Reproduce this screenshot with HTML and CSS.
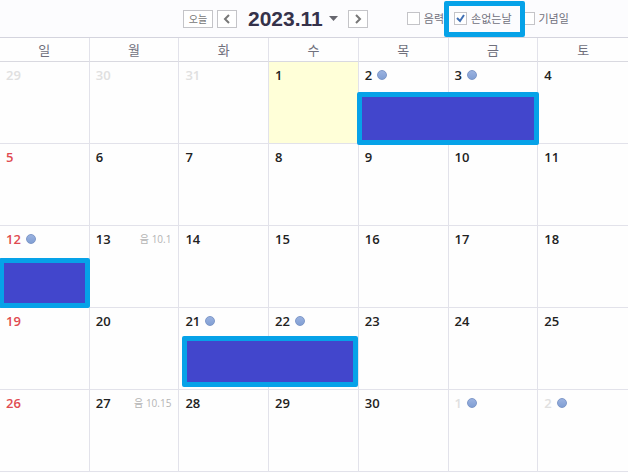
FILE: index.html
```html
<!DOCTYPE html>
<html lang="ko">
<head>
  <meta charset="UTF-8">
  <title>2023.11</title>
  <meta name="viewport" content="width=device-width, initial-scale=1.0">
  <link rel="stylesheet" href="styles.css">
</head>
<body>

  <!-- Toolbar -->
  <header class="toolbar">
    <div class="month-nav">
      <button type="button" class="btn btn-today">오늘</button>
      <button type="button" class="btn btn-arrow" aria-label="이전 달">
        <svg width="8" height="10" viewBox="0 0 8 10"><path d="M6 1L2 5l4 4" /></svg>
      </button>
      <button type="button" class="month">
        2023.11
        <svg class="caret" width="9" height="5" viewBox="0 0 9 5"><path d="M0 0h9L4.5 5z" /></svg>
      </button>
      <button type="button" class="btn btn-arrow" aria-label="다음 달">
        <svg width="8" height="10" viewBox="0 0 8 10"><path d="M2 1l4 4-4 4" /></svg>
      </button>
    </div>
    <div class="options">
      <label class="option"><input type="checkbox">음력</label>
      <label class="option marked"><input type="checkbox" checked>손없는날</label>
      <label class="option"><input type="checkbox">기념일</label>
    </div>
  </header>

  <!-- Calendar -->
  <table class="calendar">
    <thead>
      <tr><th>일</th><th>월</th><th>화</th><th>수</th><th>목</th><th>금</th><th>토</th></tr>
    </thead>
    <tbody>
      <tr>
        <td class="other"><div class="day">29</div></td>
        <td class="other"><div class="day">30</div></td>
        <td class="other"><div class="day">31</div></td>
        <td class="today"><div class="day">1</div></td>
        <td><div class="day">2<i class="dot"></i></div><div class="event event-top"></div></td>
        <td><div class="day">3<i class="dot"></i></div></td>
        <td><div class="day">4</div></td>
      </tr>
      <tr>
        <td class="sun"><div class="day">5</div></td>
        <td><div class="day">6</div></td>
        <td><div class="day">7</div></td>
        <td><div class="day">8</div></td>
        <td><div class="day">9</div></td>
        <td><div class="day">10</div></td>
        <td><div class="day">11</div></td>
      </tr>
      <tr>
        <td class="sun"><div class="day">12<i class="dot"></i></div><div class="event event-single"></div></td>
        <td><div class="day">13<span class="lunar">음 10.1</span></div></td>
        <td><div class="day">14</div></td>
        <td><div class="day">15</div></td>
        <td><div class="day">16</div></td>
        <td><div class="day">17</div></td>
        <td><div class="day">18</div></td>
      </tr>
      <tr>
        <td class="sun"><div class="day">19</div></td>
        <td><div class="day">20</div></td>
        <td><div class="day">21<i class="dot"></i></div><div class="event event-bottom"></div></td>
        <td><div class="day">22<i class="dot"></i></div></td>
        <td><div class="day">23</div></td>
        <td><div class="day">24</div></td>
        <td><div class="day">25</div></td>
      </tr>
      <tr>
        <td class="sun"><div class="day">26</div></td>
        <td><div class="day">27<span class="lunar">음 10.15</span></div></td>
        <td><div class="day">28</div></td>
        <td><div class="day">29</div></td>
        <td><div class="day">30</div></td>
        <td class="other"><div class="day">1<i class="dot"></i></div></td>
        <td class="other"><div class="day">2<i class="dot"></i></div></td>
      </tr>
    </tbody>
  </table>

</body>
</html>
```
FILE: styles.css
```css
* {
  margin: 0;
  padding: 0;
  box-sizing: border-box;
}

body {
  font-family: 'Open Sans', 'Noto Sans CJK KR', sans-serif;
  background: #fefefe;
  color: #222;
  overflow-x: hidden;
}

button {
  font-family: inherit;
  cursor: pointer;
}

/* Toolbar */
.toolbar {
  display: flex;
  align-items: center;
  gap: 39px;
  height: 37px;
  padding-left: 183px;
  background: #fcfcfe;
}

.month-nav {
  display: flex;
  align-items: center;
}

.btn {
  display: flex;
  align-items: center;
  justify-content: center;
  height: 18px;
  border: 1px solid #c4c4c8;
  background: #fff;
  color: #777;
}

.btn-today {
  width: 30px;
  margin-right: 4px;
  font-size: 10px;
  line-height: 16px;
}

.btn-arrow {
  width: 20px;
}

.btn-arrow path {
  fill: none;
  stroke: #777;
  stroke-width: 2;
}

.month {
  display: flex;
  align-items: center;
  gap: 6px;
  padding: 0 10px 0 11px;
  border: none;
  background: none;
  color: #35324a;
  font-family: 'Liberation Sans', Arial, sans-serif;
  font-size: 21px;
  font-weight: 700;
  line-height: 22px;
}

.caret {
  fill: #66666e;
}

.options {
  display: flex;
  align-items: center;
  gap: 10px;
}

.option {
  display: flex;
  align-items: center;
  gap: 4px;
  color: #70707c;
  font-size: 11px;
  line-height: 16px;
  white-space: nowrap;
}

.option input {
  appearance: none;
  width: 13px;
  height: 13px;
  border: 1px solid #c4c4c8;
  background: #fff;
}

.option input:checked {
  background: #fff url("data:image/svg+xml,%3Csvg xmlns='http://www.w3.org/2000/svg' viewBox='0 0 11 11'%3E%3Cpath d='M2 5l3 3 4-6' fill='none' stroke='%233f6fb5' stroke-width='2'/%3E%3C/svg%3E");
}

.marked {
  position: relative;
  z-index: 1;
}

.marked::before {
  content: '';
  position: absolute;
  z-index: -1;
  inset: -10px -13px -10px -10px;
  border: 5px solid #06a2e8;
  border-radius: 2px;
  background: #fcfcfe;
}

/* Calendar */
.calendar {
  width: 100%;
  table-layout: fixed;
  border-collapse: separate;
  border-spacing: 0;
  border-top: 1px solid #d4d4de;
}

.calendar th {
  height: 24px;
  border-right: 1px solid #e2e2ea;
  border-bottom: 1px solid #d9d9e0;
  color: #70707c;
  font-size: 13px;
  font-weight: 400;
  line-height: 20px;
}

.calendar td {
  position: relative;
  height: 82px;
  padding: 4px 7px 0 6px;
  border-right: 1px solid #e2e2ea;
  border-bottom: 1px solid #e2e2ea;
  vertical-align: top;
}

.calendar th:last-child,
.calendar td:last-child {
  border-right: none;
}

.calendar .today {
  background: #ffffd8;
}

.day {
  display: flex;
  align-items: center;
  font-size: 13px;
  font-weight: 600;
  line-height: 18px;
}

.sun .day {
  color: #e04b50;
}

.other .day {
  color: #e0e0e0;
}

.dot {
  width: 10px;
  height: 10px;
  margin-left: 5px;
  border: 1px solid #7d97c8;
  border-radius: 50%;
  background: linear-gradient(#9ab2e0, #819fd4);
}

.lunar {
  margin-left: auto;
  color: #b4b4b4;
  font-size: 10px;
  font-weight: 400;
}

.event {
  position: absolute;
  z-index: 1;
  border: 5px solid #06a2e8;
  border-radius: 2px;
  background: #4246cc;
}

.event-top {
  top: 30px;
  left: -2px;
  width: calc(200% + 5px);
  height: 53px;
}

.event-single {
  top: 32px;
  left: -1px;
  width: calc(100% + 2px);
  height: 50px;
}

.event-bottom {
  top: 28px;
  left: 3px;
  width: calc(200% - 2px);
  height: 51px;
}
```
